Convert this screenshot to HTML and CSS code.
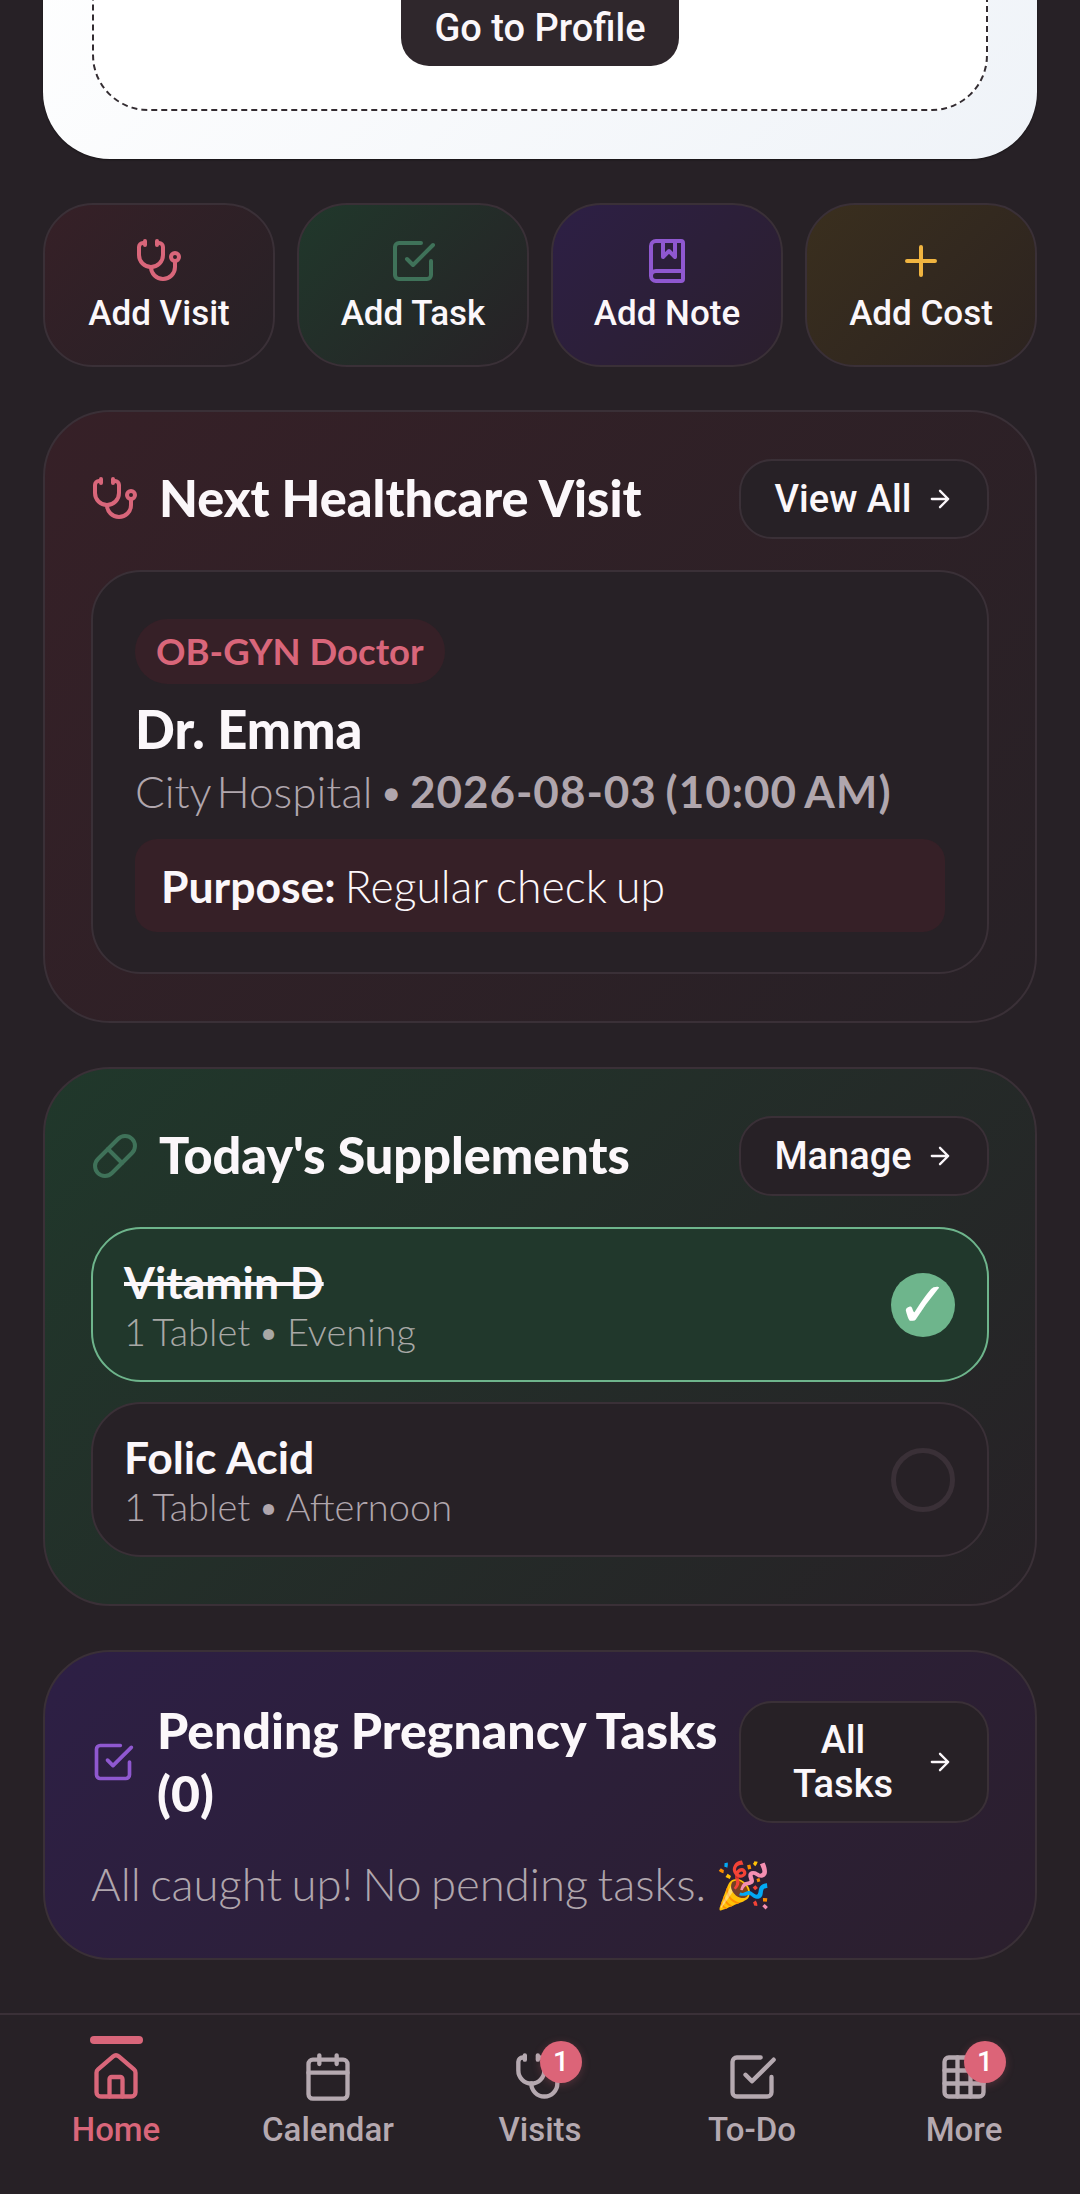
FILE: index.html
```html
<!DOCTYPE html>
<html lang="en">

<head>
    <meta charset="UTF-8">
    <meta name="viewport" content="width=device-width, initial-scale=1.0">
    <title>Pregnancy Home</title>
    <link rel="stylesheet" href="styles.css">
</head>

<body>
    <div class="screen">
        <main class="content">
            <section class="profile-card">
                <div class="profile-inner">
                    <button class="profile-button">Go to Profile</button>
                </div>
            </section>

            <div class="quick-actions">
                <button class="quick-action tint-rose">
                    <svg class="icon icon-rose" viewBox="0 0 24 24"><path d="M11 2v2M5 2v2M5 3H4a2 2 0 0 0-2 2v4a6 6 0 0 0 12 0V5a2 2 0 0 0-2-2h-1"/><path d="M8 15a6 6 0 0 0 12 0v-3"/><circle cx="20" cy="10" r="2"/></svg>
                    <span>Add Visit</span>
                </button>
                <button class="quick-action tint-green">
                    <svg class="icon icon-green" viewBox="0 0 24 24"><path d="m9 11 3 3L22 4"/><path d="M21 12v7a2 2 0 0 1-2 2H5a2 2 0 0 1-2-2V5a2 2 0 0 1 2-2h11"/></svg>
                    <span>Add Task</span>
                </button>
                <button class="quick-action tint-purple">
                    <svg class="icon icon-purple" viewBox="0 0 24 24"><path d="M10 2v8l3-3 3 3V2"/><path d="M4 19.5v-15A2.5 2.5 0 0 1 6.5 2H19a1 1 0 0 1 1 1v18a1 1 0 0 1-1 1H6.5a1 1 0 0 1 0-5H20"/></svg>
                    <span>Add Note</span>
                </button>
                <button class="quick-action tint-amber">
                    <svg class="icon icon-amber" viewBox="0 0 24 24"><path d="M5 12h14M12 5v14"/></svg>
                    <span>Add Cost</span>
                </button>
            </div>

            <section class="panel tint-rose">
                <header class="panel-header">
                    <div class="panel-title">
                        <svg class="icon icon-rose" viewBox="0 0 24 24"><path d="M11 2v2M5 2v2M5 3H4a2 2 0 0 0-2 2v4a6 6 0 0 0 12 0V5a2 2 0 0 0-2-2h-1"/><path d="M8 15a6 6 0 0 0 12 0v-3"/><circle cx="20" cy="10" r="2"/></svg>
                        <h2>Next Healthcare Visit</h2>
                    </div>
                    <button class="link-button">
                        <span>View All</span>
                        <svg class="arrow" viewBox="0 0 24 24"><path d="M5 12h14M12 5l7 7-7 7"/></svg>
                    </button>
                </header>
                <div class="visit-card">
                    <span class="visit-badge">OB-GYN Doctor</span>
                    <h3 class="visit-name">Dr. Emma</h3>
                    <p class="visit-meta">City Hospital • <strong>2026-08-03 (10:00 AM)</strong></p>
                    <p class="visit-purpose"><strong>Purpose:</strong> Regular check up</p>
                </div>
            </section>

            <section class="panel tint-green">
                <header class="panel-header">
                    <div class="panel-title">
                        <svg class="icon icon-green" viewBox="0 0 24 24"><path d="m10.5 20.5 10-10a4.95 4.95 0 1 0-7-7l-10 10a4.95 4.95 0 1 0 7 7Z"/><path d="m8.5 8.5 7 7"/></svg>
                        <h2>Today's Supplements</h2>
                    </div>
                    <button class="link-button">
                        <span>Manage</span>
                        <svg class="arrow" viewBox="0 0 24 24"><path d="M5 12h14M12 5l7 7-7 7"/></svg>
                    </button>
                </header>
                <div class="supplement-list">
                    <div class="supplement done">
                        <div>
                            <div class="supplement-name">Vitamin D</div>
                            <div class="supplement-dose">1 Tablet • Evening</div>
                        </div>
                        <span class="supplement-check">✓</span>
                    </div>
                    <div class="supplement">
                        <div>
                            <div class="supplement-name">Folic Acid</div>
                            <div class="supplement-dose">1 Tablet • Afternoon</div>
                        </div>
                        <span class="supplement-check"></span>
                    </div>
                </div>
            </section>

            <section class="panel tint-purple">
                <header class="panel-header">
                    <div class="panel-title tasks-title">
                        <svg class="icon icon-purple" viewBox="0 0 24 24"><path d="m9 11 3 3L22 4"/><path d="M21 12v7a2 2 0 0 1-2 2H5a2 2 0 0 1-2-2V5a2 2 0 0 1 2-2h11"/></svg>
                        <h2>Pending Pregnancy Tasks (0)</h2>
                    </div>
                    <button class="link-button">
                        <span>All Tasks</span>
                        <svg class="arrow" viewBox="0 0 24 24"><path d="M5 12h14M12 5l7 7-7 7"/></svg>
                    </button>
                </header>
                <p class="empty-note">All caught up! No pending tasks. 🎉</p>
            </section>
        </main>

        <nav class="tab-bar">
            <a class="tab active" href="#">
                <svg class="icon" viewBox="0 0 24 24"><path d="M15 21v-8a1 1 0 0 0-1-1h-4a1 1 0 0 0-1 1v8"/><path d="M3 10a2 2 0 0 1 .709-1.528l7-5.999a2 2 0 0 1 2.582 0l7 5.999A2 2 0 0 1 21 10v9a2 2 0 0 1-2 2H5a2 2 0 0 1-2-2z"/></svg>
                <span>Home</span>
            </a>
            <a class="tab" href="#">
                <svg class="icon" viewBox="0 0 24 24"><path d="M8 2v4M16 2v4M3 10h18"/><rect x="3" y="4" width="18" height="18" rx="2"/></svg>
                <span>Calendar</span>
            </a>
            <a class="tab" href="#">
                <svg class="icon" viewBox="0 0 24 24"><path d="M11 2v2M5 2v2M5 3H4a2 2 0 0 0-2 2v4a6 6 0 0 0 12 0V5a2 2 0 0 0-2-2h-1"/><path d="M8 15a6 6 0 0 0 12 0v-3"/><circle cx="20" cy="10" r="2"/></svg>
                <b class="tab-badge">1</b>
                <span>Visits</span>
            </a>
            <a class="tab" href="#">
                <svg class="icon" viewBox="0 0 24 24"><path d="m9 11 3 3L22 4"/><path d="M21 12v7a2 2 0 0 1-2 2H5a2 2 0 0 1-2-2V5a2 2 0 0 1 2-2h11"/></svg>
                <span>To-Do</span>
            </a>
            <a class="tab" href="#">
                <svg class="icon" viewBox="0 0 24 24"><rect x="3" y="3" width="18" height="18" rx="2"/><path d="M3 9h18M3 15h18M9 3v18M15 3v18"/></svg>
                <b class="tab-badge">1</b>
                <span>More</span>
            </a>
        </nav>
    </div>
</body>

</html>
```
FILE: styles.css
```css
* {
    margin: 0;
    padding: 0;
    box-sizing: border-box;
}

body {
    background: #272126;
    color: #fbf7fa;
    font-family: Lato, "Noto Sans", sans-serif;
    overflow: hidden;
}

button {
    font-family: Roboto, sans-serif;
    color: inherit;
    border: none;
    background: none;
}

.screen {
    display: flex;
    flex-direction: column;
    height: 2194px;
    overflow: hidden;
}

.content {
    flex: 1;
    display: flex;
    flex-direction: column;
    gap: 44px;
    padding: 0 43px;
    min-height: 0;
}

/* shared svg icon look */
.icon {
    display: block;
    width: 48px;
    height: 48px;
    flex-shrink: 0;
    fill: none;
    stroke: currentColor;
    stroke-width: 2;
    stroke-linecap: round;
    stroke-linejoin: round;
}

.icon-rose { color: #d9667a; }
.icon-green { color: #3f7259; }
.icon-purple { color: #8f58d0; }
.icon-amber { color: #f0b440; }

.tint-rose { background: linear-gradient(135deg, #362027, #272126); }
.tint-green { background: linear-gradient(135deg, #20382b, #272126); }
.tint-purple { background: linear-gradient(135deg, #2d1f45, #2b1f2d); }
.tint-amber { background: linear-gradient(135deg, #3a2f1e, #2c2320); }

/* profile card, scrolled partly off the top */
.profile-card {
    margin-top: -120px;
    flex-shrink: 0;
    height: 279px;
    padding: 0 49px 48px;
    border-radius: 0 0 67px 67px;
    background: linear-gradient(135deg, #ffffff, #eff3f8);
    box-shadow: 0 1px 2px rgba(0, 0, 0, 0.4);
}

.profile-inner {
    display: flex;
    justify-content: center;
    align-items: flex-end;
    height: 100%;
    padding-bottom: 43px;
    border: 2px dashed #332c31;
    border-top: none;
    border-radius: 0 0 56px 56px;
    background: #fff;
}

.profile-button {
    width: 278px;
    height: 100px;
    border-radius: 28px;
    background: #2f272c;
    color: #fbf7fa;
    font-size: 38px;
    font-weight: 500;
    padding-top: 40px;
    padding-bottom: 18px;
}

.quick-actions {
    display: grid;
    grid-template-columns: repeat(4, 1fr);
    gap: 22px;
    flex-shrink: 0;
    margin-bottom: -1px;
}

.quick-action {
    display: flex;
    flex-direction: column;
    align-items: center;
    justify-content: center;
    gap: 8px;
    height: 164px;
    border: 2px solid #3a3037;
    border-radius: 50px;
    font-size: 35px;
    font-weight: 500;
}

.panel {
    flex-shrink: 0;
    padding: 47px 46px;
    border: 2px solid #3a3037;
    border-radius: 67px;
}

.panel-header {
    display: flex;
    justify-content: space-between;
    align-items: center;
    margin-bottom: 31px;
}

.panel-title {
    display: flex;
    align-items: center;
    gap: 20px;
}

.panel-title h2 {
    font-size: 50.4px;
    font-weight: 900;
    line-height: 63px;
    padding-bottom: 3px;
}

.tasks-title {
    flex: 1;
    min-width: 0;
    gap: 22px;
}

.tasks-title .icon {
    width: 44px;
    height: 44px;
}

.tasks-title h2 {
    padding-bottom: 0;
    font-size: 50px;
}

.link-button {
    display: flex;
    align-items: center;
    gap: 14px;
    flex-shrink: 0;
    width: 250px;
    min-height: 80px;
    padding: 15px 33px;
    border: 2px solid #3a3037;
    border-radius: 33px;
    background: #272126;
    font-size: 38px;
    font-weight: 500;
    line-height: 44px;
}

.link-button span {
    flex: 1;
    text-align: center;
}

.arrow {
    width: 28px;
    height: 28px;
    flex-shrink: 0;
    fill: none;
    stroke: currentColor;
    stroke-width: 2;
    stroke-linecap: round;
    stroke-linejoin: round;
}

/* next visit */
.visit-card {
    display: flex;
    flex-direction: column;
    align-items: flex-start;
    padding: 47px 42px 40px;
    border: 2px solid #3a3037;
    border-radius: 50px;
    background: #272126;
}

.visit-badge {
    height: 65px;
    padding: 0 21px;
    border-radius: 33px;
    background: #362027;
    color: #d9667a;
    font-size: 36.5px;
    font-weight: 700;
    line-height: 65px;
}

.visit-name {
    margin-top: 13px;
    font-size: 52.5px;
    font-weight: 900;
    line-height: 64px;
}

.visit-meta {
    margin-top: 2px;
    color: #b0a6ad;
    font-size: 44px;
    font-weight: 300;
    line-height: 56px;
    word-spacing: -6px;
}

.visit-meta strong {
    font-weight: 700;
    letter-spacing: 1px;
    word-spacing: -3px;
}

.visit-purpose {
    align-self: stretch;
    margin-top: 20px;
    padding: 18px 26px;
    border-radius: 22px;
    background: #362027;
    font-size: 44.5px;
    font-weight: 300;
    line-height: 57px;
    word-spacing: -3px;
}

.visit-purpose strong {
    font-weight: 700;
}

/* supplements */
.supplement-list {
    display: flex;
    flex-direction: column;
    gap: 20px;
}

.supplement {
    display: flex;
    justify-content: space-between;
    align-items: center;
    height: 155px;
    padding: 0 32px 0 31px;
    border: 2px solid #3a3037;
    border-radius: 50px;
    background: #272126;
}

.supplement.done {
    border-color: #6eb58c;
    background: #21382c;
}

.supplement-name {
    font-size: 44.5px;
    font-weight: 700;
    line-height: 52px;
}

.done .supplement-name {
    text-decoration: line-through;
}

.supplement-dose {
    color: #b0a6ad;
    font-size: 38px;
    font-weight: 300;
    line-height: 46px;
    word-spacing: -3px;
}

.done .supplement-dose {
    color: #a8a8a6;
}

.supplement-check {
    display: flex;
    align-items: center;
    justify-content: center;
    width: 64px;
    height: 64px;
    border: 5px solid #3a3037;
    border-radius: 50%;
}

.done .supplement-check {
    border: none;
    background: #6eb58c;
    color: #fff;
    font-family: "DejaVu Sans", sans-serif;
    font-size: 64px;
}

.empty-note {
    color: #b0a6ad;
    font-size: 45.5px;
    font-weight: 300;
    line-height: 55px;
    word-spacing: -3px;
}

/* bottom navigation */
.tab-bar {
    display: flex;
    flex-shrink: 0;
    height: 181px;
    padding: 0 10px;
    border-top: 2px solid #3a3037;
    background: #272126;
}

.tab {
    position: relative;
    flex: 1;
    display: flex;
    flex-direction: column;
    align-items: center;
    padding-top: 36px;
    color: #b5a9b0;
    font-family: Roboto, sans-serif;
    font-size: 33px;
    font-weight: 500;
    text-decoration: none;
    gap: 7px;
}

.tab .icon {
    width: 52px;
    height: 52px;
}

.tab.active {
    color: #d9667a;
}

.tab.active::before {
    content: "";
    position: absolute;
    top: 21px;
    left: 50%;
    width: 53px;
    height: 8px;
    margin-left: -26.5px;
    border-radius: 4px;
    background: #d9667a;
}

.tab-badge {
    position: absolute;
    top: 26px;
    left: 50%;
    width: 42px;
    height: 42px;
    border-radius: 50%;
    background: #dc6478;
    box-shadow: 0 2px 8px rgba(220, 100, 120, 0.25);
    color: #fff;
    font-size: 28px;
    font-weight: 500;
    line-height: 42px;
    text-align: center;
}
```
